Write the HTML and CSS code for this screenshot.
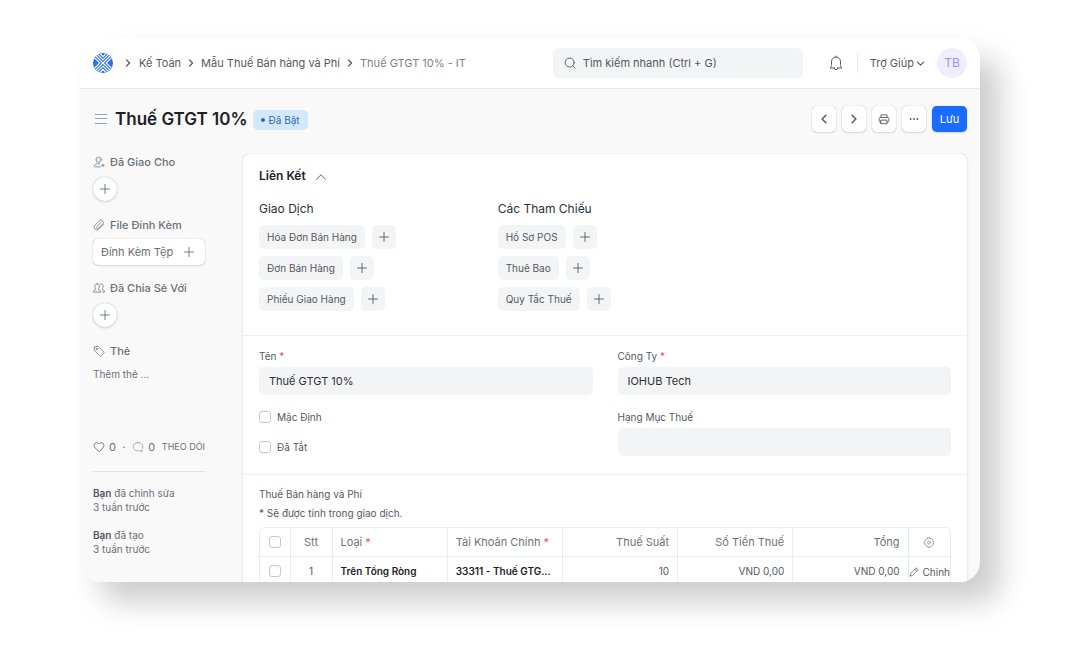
FILE: index.html
```html
<!DOCTYPE html>
<html lang="vi">
<head>
<meta charset="utf-8">
<meta name="viewport" content="width=device-width, initial-scale=1">
<title>Thuế GTGT 10% - IT</title>
<link rel="stylesheet" href="styles.css">
</head>
<body>
<svg class="defs" aria-hidden="true">
  <symbol id="plus" viewBox="0 0 16 16"><path d="M8 2v12M2 8h12"/></symbol>
  <symbol id="right" viewBox="0 0 16 16"><path d="M5.500 3 10.500 8l-5 5"/></symbol>
  <symbol id="left" viewBox="0 0 16 16"><path d="M10.500 3 5.500 8l5 5"/></symbol>
  <symbol id="down" viewBox="0 0 16 16"><path d="M2.500 5.500 8 11l5.500-5.500"/></symbol>
  <symbol id="up" viewBox="0 0 16 16"><path d="M2 11 8 5l6 6"/></symbol>
</svg>
<div class="window">
  <header class="navbar">
    <nav class="crumbs" aria-label="Breadcrumb">
      <a class="logo" href="#" aria-label="Trang chủ">
        <svg viewBox="-10 -10 20 20" width="20" height="20">
          <clipPath id="disc"><circle r="10"/></clipPath>
          <g clip-path="url(#disc)">
            <rect x="-10" y="-10" width="20" height="20" fill="#2b6fec"/>
            <g fill="none" stroke="#fff" stroke-width="1.100">
              <path d="M-8-8 8 8M8-8-8 8"/>
              <path d="M-8-11.200 0-3.200l8-8M-8-14.400 0-6.400l8-8"/>
              <path d="M-8 11.200 0 3.200l8 8M-8 14.400 0 6.400l8 8"/>
              <path d="M-11.200-8-3.200 0l-8 8M11.200-8 3.200 0l8 8"/>
            </g>
          </g>
        </svg>
      </a>
      <svg class="icon sep"><use href="#right"/></svg>
      <a href="#">Kế Toán</a>
      <svg class="icon sep"><use href="#right"/></svg>
      <a href="#">Mẫu Thuế Bán hàng và Phí</a>
      <svg class="icon sep"><use href="#right"/></svg>
      <a class="current" href="#" aria-current="page">Thuế GTGT 10% - IT</a>
    </nav>
    <label class="search">
      <svg class="icon" viewBox="0 0 16 16"><circle cx="7.500" cy="7.500" r="6"/><path d="m12 12 3 3"/></svg>
      <input type="search" placeholder="Tìm kiếm nhanh (Ctrl + G)" aria-label="Tìm kiếm nhanh">
    </label>
    <div class="tools">
      <button class="bare bell" aria-label="Thông báo"><svg class="icon" viewBox="0 0 16 16"><path d="M6.300 13H2c1.200-1.200 1.500-2.200 1.500-3.500V6.500a4.500 4.500 0 0 1 9 0v3c0 1.300.3 2.300 1.500 3.500H9.700M6.300 13a1.700 1.700 0 0 0 3.400 0M8 2V1"/></svg></button>
      <button class="bare help">Trợ Giúp <svg class="icon"><use href="#down"/></svg></button>
      <button class="avatar">TB</button>
    </div>
  </header>

  <div class="page-head">
    <button class="bare menu" aria-label="Menu"><svg viewBox="0 0 14 12" width="14" height="12"><path d="M1 1.500h12M1 5.500h12M1 10.500h12"/></svg></button>
    <h1>Thuế GTGT 10%</h1>
    <span class="status">Đã Bật</span>
    <div class="actions">
      <button class="btn" aria-label="Trước"><svg class="icon bold"><use href="#left"/></svg></button>
      <button class="btn" aria-label="Sau"><svg class="icon bold"><use href="#right"/></svg></button>
      <button class="btn" aria-label="In"><svg class="icon" viewBox="0 0 16 16"><path d="M4 6V2.500h8V6M4 12H3.200A1.700 1.700 0 0 1 1.500 10.300V7.700A1.700 1.700 0 0 1 3.200 6h9.600a1.700 1.700 0 0 1 1.700 1.700v2.600a1.700 1.700 0 0 1-1.700 1.700H12M4 9.500h8v4.700H4z"/></svg></button>
      <button class="btn" aria-label="Thêm"><svg class="icon dots" viewBox="0 0 16 16"><circle cx="3.500" cy="8" r="1.200"/><circle cx="8" cy="8" r="1.200"/><circle cx="12.500" cy="8" r="1.200"/></svg></button>
      <button class="btn primary">Lưu</button>
    </div>
  </div>

  <div class="layout">
    <aside class="sidebar">
      <section class="side-block">
        <h2><svg class="icon" viewBox="0 0 16 16"><circle cx="7.500" cy="5" r="3.500"/><path d="M10 14.500H2.800c-1 0-1.500-.7-1.200-1.600.6-1.600 2-2.400 3.900-2.400h3.500M13.200 10.700v3.600M11.400 12.500h3.600"/></svg>Đã Giao Cho</h2>
        <button class="round" aria-label="Giao cho"><svg class="icon"><use href="#plus"/></svg></button>
      </section>
      <section class="side-block">
        <h2><svg class="icon" viewBox="0 0 16 16"><path d="m14 7-6.300 6.300a3.500 3.500 0 0 1-5-5L8.800 2.200a2.500 2.500 0 0 1 3.600 0l.8.800a2.500 2.500 0 0 1 0 3.500l-5.700 5.700a1.500 1.500 0 0 1-2.200-2.200l5.200-5.200"/></svg>File Đính Kèm</h2>
        <button class="btn attach">Đính Kèm Tệp <svg class="icon"><use href="#plus"/></svg></button>
      </section>
      <section class="side-block">
        <h2><svg class="icon" viewBox="0 0 16 16"><path d="M5.500 2.500c2 0 3 1.400 3 3.200S7.400 9 7.400 9v1.200c1.800.5 3 1.100 3 3.300H.6c0-2.200 1.200-2.800 3-3.300V9S2.500 7.500 2.500 5.700s1-3.200 3-3.200zM10 2.500c2.200-.3 3.500 1 3.500 3.200 0 1.800-1.100 3.300-1.100 3.300v1.200c1.800.5 3 1.100 3 3.300h-2.500"/></svg>Đã Chia Sẻ Với</h2>
        <button class="round" aria-label="Chia sẻ"><svg class="icon"><use href="#plus"/></svg></button>
      </section>
      <section class="side-block tags">
        <h2><svg class="icon" viewBox="0 0 16 16"><path d="M1.800 3.300v4L9 14.400c.6.600 1.300.6 1.900 0l3.300-3.300c.6-.6.6-1.300 0-1.900L7.200 2H3.100c-.8 0-1.300.5-1.300 1.300z"/><circle cx="5" cy="5.200" r="1"/></svg>Thẻ</h2>
        <button class="bare add-tag">Thêm thẻ ...</button>
      </section>
      <div class="social">
        <button class="bare"><svg class="icon" viewBox="0 0 16 16"><path d="M8 14.200 2.400 8.600a3.700 3.700 0 0 1 0-5.200 3.600 3.600 0 0 1 5.100 0l.5.500.5-.5a3.600 3.600 0 0 1 5.100 0 3.700 3.700 0 0 1 0 5.200z"/></svg>0</button>
        <span>·</span>
        <button class="bare"><svg class="icon light" viewBox="0 0 16 16"><path d="M8 2c3.700 0 6.500 2.400 6.500 5.600 0 1.500-.6 2.800-1.600 3.800l.4 3.100-3-1.500A8 8 0 0 1 8 13.200c-3.700 0-6.500-2.400-6.500-5.600S4.300 2 8 2z"/></svg>0</button>
        <button class="bare follow">THEO DÕI</button>
      </div>
      <p class="log"><b>Bạn</b> đã chỉnh sửa<br>3 tuần trước</p>
      <p class="log"><b>Bạn</b> đã tạo<br>3 tuần trước</p>
    </aside>

    <main class="card">
      <section class="section links">
        <h2>Liên Kết <svg class="icon"><use href="#up"/></svg></h2>
        <div class="link-grid">
          <div class="link-col">
            <h3>Giao Dịch</h3>
            <div class="link-row"><a class="chip" href="#">Hóa Đơn Bán Hàng</a><button class="chip add" aria-label="Thêm Hóa Đơn"><svg class="icon"><use href="#plus"/></svg></button></div>
            <div class="link-row"><a class="chip" href="#">Đơn Bán Hàng</a><button class="chip add" aria-label="Thêm Đơn"><svg class="icon"><use href="#plus"/></svg></button></div>
            <div class="link-row"><a class="chip" href="#">Phiếu Giao Hàng</a><button class="chip add" aria-label="Thêm Phiếu"><svg class="icon"><use href="#plus"/></svg></button></div>
          </div>
          <div class="link-col">
            <h3>Các Tham Chiếu</h3>
            <div class="link-row"><a class="chip" href="#">Hồ Sơ POS</a><button class="chip add" aria-label="Thêm Hồ Sơ"><svg class="icon"><use href="#plus"/></svg></button></div>
            <div class="link-row"><a class="chip" href="#">Thuê Bao</a><button class="chip add" aria-label="Thêm Thuê Bao"><svg class="icon"><use href="#plus"/></svg></button></div>
            <div class="link-row"><a class="chip" href="#">Quy Tắc Thuế</a><button class="chip add" aria-label="Thêm Quy Tắc"><svg class="icon"><use href="#plus"/></svg></button></div>
          </div>
        </div>
      </section>

      <section class="section form">
        <div class="form-col">
          <div class="field"><label for="ten">Tên <i>*</i></label><input id="ten" type="text" value="Thuế GTGT 10%"></div>
          <label class="check"><input type="checkbox">Mặc Định</label>
          <label class="check"><input type="checkbox">Đã Tắt</label>
        </div>
        <div class="form-col">
          <div class="field"><label for="cty">Công Ty <i>*</i></label><input id="cty" type="text" value="IOHUB Tech"></div>
          <div class="field"><label for="hang">Hạng Mục Thuế</label><input id="hang" type="text"></div>
        </div>
      </section>

      <section class="section taxes">
        <p>Thuế Bán hàng và Phí</p>
        <p class="hint">* Sẽ được tính trong giao dịch.</p>
        <div class="table-box">
          <table>
            <colgroup><col class="c-check"><col class="c-no"><col><col><col><col><col><col class="c-edit"></colgroup>
            <thead>
              <tr>
                <th class="mid"><input type="checkbox" aria-label="Chọn tất cả"></th><th class="mid">Stt</th><th>Loại <i>*</i></th><th>Tài Khoản Chính <i>*</i></th><th class="num">Thuế Suất</th><th class="num">Số Tiền Thuế</th><th class="num">Tổng</th>
                <th class="mid"><button class="bare gear" aria-label="Cấu hình"><svg class="icon" viewBox="0 0 16 16"><path d="m6.700 1 2.600 0 .5 1.700 1.600-.8 1.900 1.900-.8 1.600 1.900.8v2.600l-1.900.5.8 1.700-1.900 1.900-1.600-.8-.5 1.900H6.700l-.5-1.900-1.600.8-1.900-1.900.8-1.700L1.600 8.800V6.200l1.900-.8-.8-1.600 1.900-1.900 1.600.8z"/><circle cx="8" cy="7.500" r="2"/></svg></button></th>
              </tr>
            </thead>
            <tbody>
              <tr>
                <td class="mid"><input type="checkbox" aria-label="Chọn dòng 1"></td><td class="mid">1</td><td class="strong">Trên Tổng Ròng</td><td class="strong">33311 - Thuế GTG...</td><td class="num">10</td><td class="num">VND 0,00</td><td class="num">VND 0,00</td>
                <td class="edit"><button class="bare"><svg class="icon" viewBox="0 0 16 16"><path d="m2 14 .8-3.700 8-8a1.500 1.500 0 0 1 2.100 0l.8.800a1.500 1.500 0 0 1 0 2.100l-8 8zM9.500 3.600l2.900 2.900"/></svg>Chỉnh</button></td>
              </tr>
            </tbody>
          </table>
        </div>
      </section>
    </main>
  </div>
</div>
</body>
</html>
```
FILE: styles.css
```css
* { box-sizing: border-box; }

body {
  margin: 0;
  padding: 38px 100px 71px 80px;
  height: 100vh;
  background: #fff;
  font: 11px/16px Inter, "Noto Sans", sans-serif;
  color: #54595e;
}

h1, h2, h3, p { margin: 0; }
a { color: inherit; text-decoration: none; }
button, input { font: inherit; color: inherit; }
button { cursor: pointer; }
i { color: #e2574c; font-style: normal; }

.defs { display: none; }

.icon {
  width: 12px;
  height: 12px;
  flex: none;
  fill: none;
  stroke: currentColor;
  stroke-width: 1.2;
  stroke-linecap: round;
  stroke-linejoin: round;
}
.icon.bold { stroke-width: 2; }
.icon.light { opacity: .6; }
.icon.dots { fill: currentColor; stroke: none; }

.bare {
  display: inline-flex;
  align-items: center;
  padding: 0;
  border: 0;
  background: none;
}

.window {
  height: 100%;
  overflow: hidden;
  border-radius: 20px;
  background: #f9f9fa;
  box-shadow: 20px 20px 30px rgba(0, 0, 0, .2);
}

.navbar {
  display: flex;
  align-items: center;
  height: 51px;
  padding: 0 13px;
  background: #fff;
  border-bottom: 1px solid #e8eaeb;
}
.crumbs { display: flex; align-items: center; flex: 1; }
.logo { display: flex; }
.sep { width: 10px; height: 10px; margin: 0 5px; stroke-width: 2; }
.logo + .sep { margin: 0 6px 0 10px; }
.current { color: #7c8186; }

.search {
  display: flex;
  align-items: center;
  gap: 7px;
  width: 250px;
  height: 30px;
  padding: 0 11px;
  border-radius: 6px;
  background: #f3f4f5;
}
.search input {
  flex: 1;
  min-width: 0;
  padding: 0;
  border: 0;
  outline: 0;
  background: none;
}
.search input::placeholder { color: #54595e; opacity: 1; }

.tools { display: flex; align-items: center; margin-left: 25px; }
.bell .icon { width: 16px; height: 16px; stroke-width: 1; }
.help {
  gap: 2px;
  height: 20px;
  margin-left: 13px;
  padding-left: 12px;
  border-left: 1px solid #e4e6e8;
}
.help .icon { width: 9px; height: 9px; stroke-width: 2; }
.avatar {
  width: 30px;
  height: 30px;
  margin-left: 12px;
  padding: 0;
  border: 0;
  border-radius: 50%;
  background: #f0eefc;
  color: #9d8ff0;
  font-size: 12px;
}

.page-head {
  display: flex;
  align-items: center;
  height: 60px;
  padding: 0 13px;
}
.menu { padding: 0 1px; }
.menu svg { fill: none; stroke: #9aa0a6; stroke-width: 1; }
h1 { margin-left: 6px; font-size: 17px; line-height: 24px; font-weight: 600; color: #1c2126; }
.status {
  display: flex;
  align-items: center;
  height: 20px;
  margin: 2px 0 0 5px;
  padding: 0 8px;
  border-radius: 5px;
  background: #d3e9fb;
  color: #2c6cab;
  font-size: 10px;
}
.status::before {
  content: "";
  width: 4px;
  height: 4px;
  margin-right: 4px;
  border-radius: 50%;
  background: #1f6fb8;
}
.actions { display: flex; gap: 6px; margin-left: auto; }
.btn {
  display: flex;
  align-items: center;
  justify-content: center;
  width: 24px;
  height: 26px;
  padding: 0;
  border: 0;
  border-radius: 5px;
  background: #fff;
  box-shadow: 0 0 1px rgba(25, 39, 52, .4), 0 1px 2px rgba(25, 39, 52, .12);
}
.primary { width: 35px; background: #1b6bff; color: #fff; }

.layout { display: flex; align-items: flex-start; padding: 5px 13px 0; }

.sidebar { width: 112px; flex: none; margin-right: 38px; color: #6a7076; }
.side-block { height: 63px; }
.side-block h2 {
  display: flex;
  align-items: center;
  gap: 5px;
  font-size: 11px;
  line-height: 16px;
  font-weight: 500;
}
.side-block h2 .icon { stroke-width: 1; }
.round {
  display: flex;
  align-items: center;
  justify-content: center;
  width: 24px;
  height: 24px;
  margin-top: 7px;
  padding: 0;
  border: 0;
  border-radius: 50%;
  background: #fff;
  box-shadow: 0 0 1px rgba(25, 39, 52, .4), 0 1px 3px rgba(25, 39, 52, .15);
}
.attach { justify-content: space-between; width: 100%; margin-top: 6px; padding: 0 10px 0 8px; }
.side-block.tags { height: 94px; }
.add-tag { margin-top: 7px; font-size: 10px; }
.social {
  display: flex;
  align-items: center;
  justify-content: space-between;
  height: 35px;
  padding-bottom: 14px;
  border-bottom: 1px solid #dfe2e4;
}
.social .bare { gap: 4px; }
.social .follow { font-size: 9px; }
.log { margin-top: 14px; font-size: 10px; line-height: 14px; }
.log b { font-weight: 600; color: #50565c; }

.card {
  flex: 1;
  min-width: 0;
  border-radius: 6px;
  background: #fff;
  box-shadow: 0 0 1px rgba(25, 39, 52, .3), 0 1px 3px rgba(25, 39, 52, .1);
}
.section { padding: 12px 16px 18px; }
.section + .section { border-top: 1px solid #f0f1f2; }
.links { padding-top: 13px; padding-bottom: 24px; }
.links h2 {
  display: flex;
  align-items: center;
  gap: 9px;
  font-size: 12px;
  line-height: 18px;
  font-weight: 600;
  color: #1c2126;
}
.links h2 .icon { margin-top: 2px; color: #4c5258; }
.link-grid { display: grid; grid-template-columns: repeat(3, 1fr); gap: 24px; margin-top: 15px; }
.link-col { display: flex; flex-direction: column; gap: 7px; }
h3 { font-size: 12px; line-height: 18px; font-weight: 400; color: #2b3035; }
.link-row { display: flex; gap: 7px; }
.chip {
  display: flex;
  align-items: center;
  height: 24px;
  padding: 0 8px;
  border: 0;
  border-radius: 5px;
  background: #f3f4f5;
  font-size: 10px;
}
.chip.add { padding: 0 6px; }

.form { display: grid; grid-template-columns: 1fr 1fr; gap: 25px; }
.form-col { display: flex; flex-direction: column; gap: 14px; }
.field { display: flex; flex-direction: column; gap: 3px; font-size: 10px; }
.field input {
  width: 100%;
  height: 28px;
  padding: 0 10px;
  border: 0;
  border-radius: 5px;
  background: #f3f4f5;
  color: #2b3035;
  font-size: 11px;
}
.check { display: flex; align-items: center; gap: 6px; height: 16px; font-size: 10px; }
input[type="checkbox"] {
  appearance: none;
  display: block;
  width: 12px;
  height: 12px;
  margin: 0;
  border: 1px solid #c3c8cc;
  border-radius: 3px;
  background: #fff;
}
.mid input[type="checkbox"] { margin: 0 auto; }

.taxes { padding-top: 11px; font-size: 10px; }
.hint { margin: 3px 0 6px; }
.table-box { overflow: hidden; border: 1px solid #e9ebec; border-radius: 6px; }
table { width: 100%; table-layout: fixed; border-collapse: collapse; font-size: 10px; }
.c-check { width: 30px; }
.c-no { width: 42px; }
.c-edit { width: 42px; }
th, td {
  height: 29px;
  padding: 0 8px;
  overflow: hidden;
  border-left: 1px solid #e9ebec;
  text-align: left;
  white-space: nowrap;
}
th:first-child, td:first-child { border-left: 0; }
th { height: 28px; border-bottom: 1px solid #e9ebec; color: #6d7379; font-size: 11px; font-weight: 400; }
th.mid, td.mid { padding: 0; text-align: center; }
th.num, td.num { text-align: right; }
.strong { color: #1c2126; font-weight: 600; }
.gear { vertical-align: middle; }
.gear .icon { opacity: .8; stroke-width: 1; }
td.edit { padding: 4px 0 0; }
.edit .bare { gap: 4px; }
.edit .icon { width: 10px; height: 10px; }
```
